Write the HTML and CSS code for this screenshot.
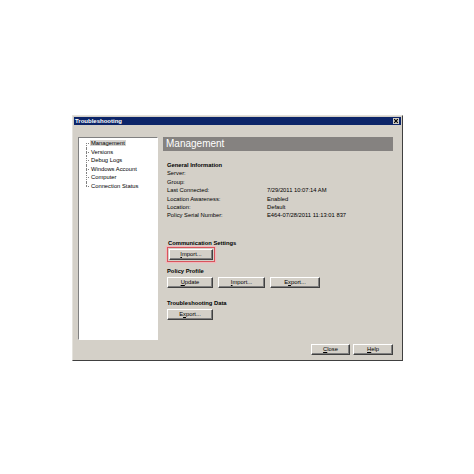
FILE: index.html
```html
<!DOCTYPE html>
<html>
<head>
<meta charset="utf-8">
<link rel="stylesheet" href="styles.css">
</head>
<body>
<div class="dialog">
  <div class="titlebar">
    <span class="title">Troubleshooting</span>
    <span class="xbtn"><svg width="6" height="6" viewBox="0 0 6 6"><path d="M1.2 1.2 L4.8 4.8 M4.8 1.2 L1.2 4.8" stroke="#000" stroke-width="1.2"/></svg></span>
  </div>
  <div class="main">
    <ul class="tree">
      <li class="sel"><span>Management</span></li>
      <li><span>Versions</span></li>
      <li><span>Debug Logs</span></li>
      <li><span>Windows Account</span></li>
      <li><span>Computer</span></li>
      <li><span>Connection Status</span></li>
    </ul>
    <div class="content">
      <div class="header">Management</div>
      <div class="section info">
        <div class="heading">General Information</div>
        <div class="row"><span class="label">Server:</span><span class="value"></span></div>
        <div class="row"><span class="label">Group:</span><span class="value"></span></div>
        <div class="row"><span class="label">Last Connected:</span><span class="value">7/29/2011 10:07:14 AM</span></div>
        <div class="row"><span class="label">Location Awareness:</span><span class="value">Enabled</span></div>
        <div class="row"><span class="label">Location:</span><span class="value">Default</span></div>
        <div class="row"><span class="label">Policy Serial Number:</span><span class="value">E464-07/28/2011 11:13:01 837</span></div>
      </div>
      <div class="section comm">
        <div class="heading">Communication Settings</div>
        <div class="focus"><button class="btn w-a"><u>I</u>mport...</button></div>
      </div>
      <div class="section policy">
        <div class="heading">Policy Profile</div>
        <div class="btnrow">
          <button class="btn w-a"><u>U</u>pdate</button>
          <button class="btn w-b"><u>I</u>mport...</button>
          <button class="btn w-c">E<u>x</u>port...</button>
        </div>
      </div>
      <div class="section trouble">
        <div class="heading">Troubleshooting Data</div>
        <div class="btnrow">
          <button class="btn w-a">E<u>x</u>port...</button>
        </div>
      </div>
    </div>
  </div>
  <div class="footer">
    <button class="btn w-close"><u>C</u>lose</button>
    <button class="btn w-help"><u>H</u>elp</button>
  </div>
</div>
</body>
</html>
```
FILE: styles.css
```css
html, body {
  margin: 0;
  padding: 0;
  background: #ffffff;
}
body {
  width: 474px;
  height: 474px;
  overflow: hidden;
  font-family: "Liberation Sans", Arial, sans-serif;
  font-size: 5.8px;
  color: #000;
}
.dialog {
  box-sizing: border-box;
  margin: 115px 0 0 72px;
  width: 331px;
  height: 246px;
  background: #d4d0c8;
  border: 1px solid;
  border-color: #e4e2dc #404040 #404040 #e4e2dc;
  padding: 1px;
  display: flex;
  flex-direction: column;
}
.titlebar {
  height: 8px;
  background: #0c2468;
  display: flex;
  align-items: center;
  justify-content: space-between;
  padding: 0 2px 0 1px;
}
.title {
  color: #fff;
  font-weight: bold;
  font-size: 6px;
  line-height: 8px;
}
.xbtn {
  width: 6px;
  height: 6px;
  background: #d4d0c8;
  display: flex;
}
.main {
  display: flex;
  gap: 5px;
  padding: 12px 0 0 4px;
  height: 203px;
}
.tree {
  box-sizing: border-box;
  margin: 0;
  list-style: none;
  width: 80px;
  height: 203px;
  background: #fff;
  border: 1px solid;
  border-color: #808080 #ffffff #ffffff #808080;
  padding: 1px 0 0 0;
}
.tree li {
  position: relative;
  padding-left: 11px;
  line-height: 8.6px;
  height: 8.6px;
}
.tree li span {
  padding: 0 1px;
}
.tree li.sel span {
  background: #d6d4d0;
}
.tree li::before {
  content: "";
  position: absolute;
  left: 7px;
  top: 4px;
  width: 3px;
  border-top: 1px dotted #808080;
}
.tree li::after {
  content: "";
  position: absolute;
  left: 7px;
  top: 0;
  height: 8.6px;
  border-left: 1px dotted #808080;
}
.tree li:first-child::after {
  top: 4px;
  height: 4.6px;
}
.tree li:last-child::after {
  height: 4px;
}
.content {
  width: 230px;
  display: flex;
  flex-direction: column;
}
.header {
  height: 14px;
  background: #858280;
  color: #fff;
  font-size: 10px;
  line-height: 14px;
  padding-left: 3px;
}
.section {
  padding-left: 4px;
  display: flex;
  flex-direction: column;
  align-items: flex-start;
}
.heading {
  font-weight: bold;
  line-height: 8.4px;
  height: 8.4px;
}
.info {
  margin-top: 10px;
}
.row {
  display: flex;
  line-height: 8.4px;
  height: 8.4px;
}
.label {
  width: 100px;
}
.comm {
  margin-top: 19px;
}
.comm .heading {
  padding-left: 1px;
}
.focus {
  margin-top: 0;
  border: 1px solid #d8545c;
  box-shadow: 0 0 1px 1px #f0b8bc;
  padding: 1px;
  display: flex;
}
.policy {
  margin-top: 5px;
}
.trouble {
  margin-top: 11px;
}
.btnrow {
  display: flex;
  gap: 5px;
  margin-top: 1px;
}
.trouble .btnrow {
  margin-top: 2px;
}
.btn {
  box-sizing: border-box;
  height: 11px;
  padding: 0;
  margin: 0;
  font-family: "Liberation Sans", Arial, sans-serif;
  font-size: 5.8px;
  line-height: 9px;
  color: #000;
  background: #d4d0c8;
  border: 1px solid;
  border-color: #ffffff #404040 #404040 #ffffff;
  box-shadow: inset -1px -1px 0 #808080;
  text-align: center;
}
.btn u {
  text-decoration-thickness: 0.5px;
}
.w-a { width: 46px; }
.w-b { width: 47px; }
.w-c { width: 50px; }
.focus .btn { width: 44px; }
.w-close { width: 39px; }
.w-help { width: 40px; }
.footer {
  display: flex;
  justify-content: flex-end;
  gap: 3px;
  margin-top: 4px;
  padding-right: 8px;
}
```
